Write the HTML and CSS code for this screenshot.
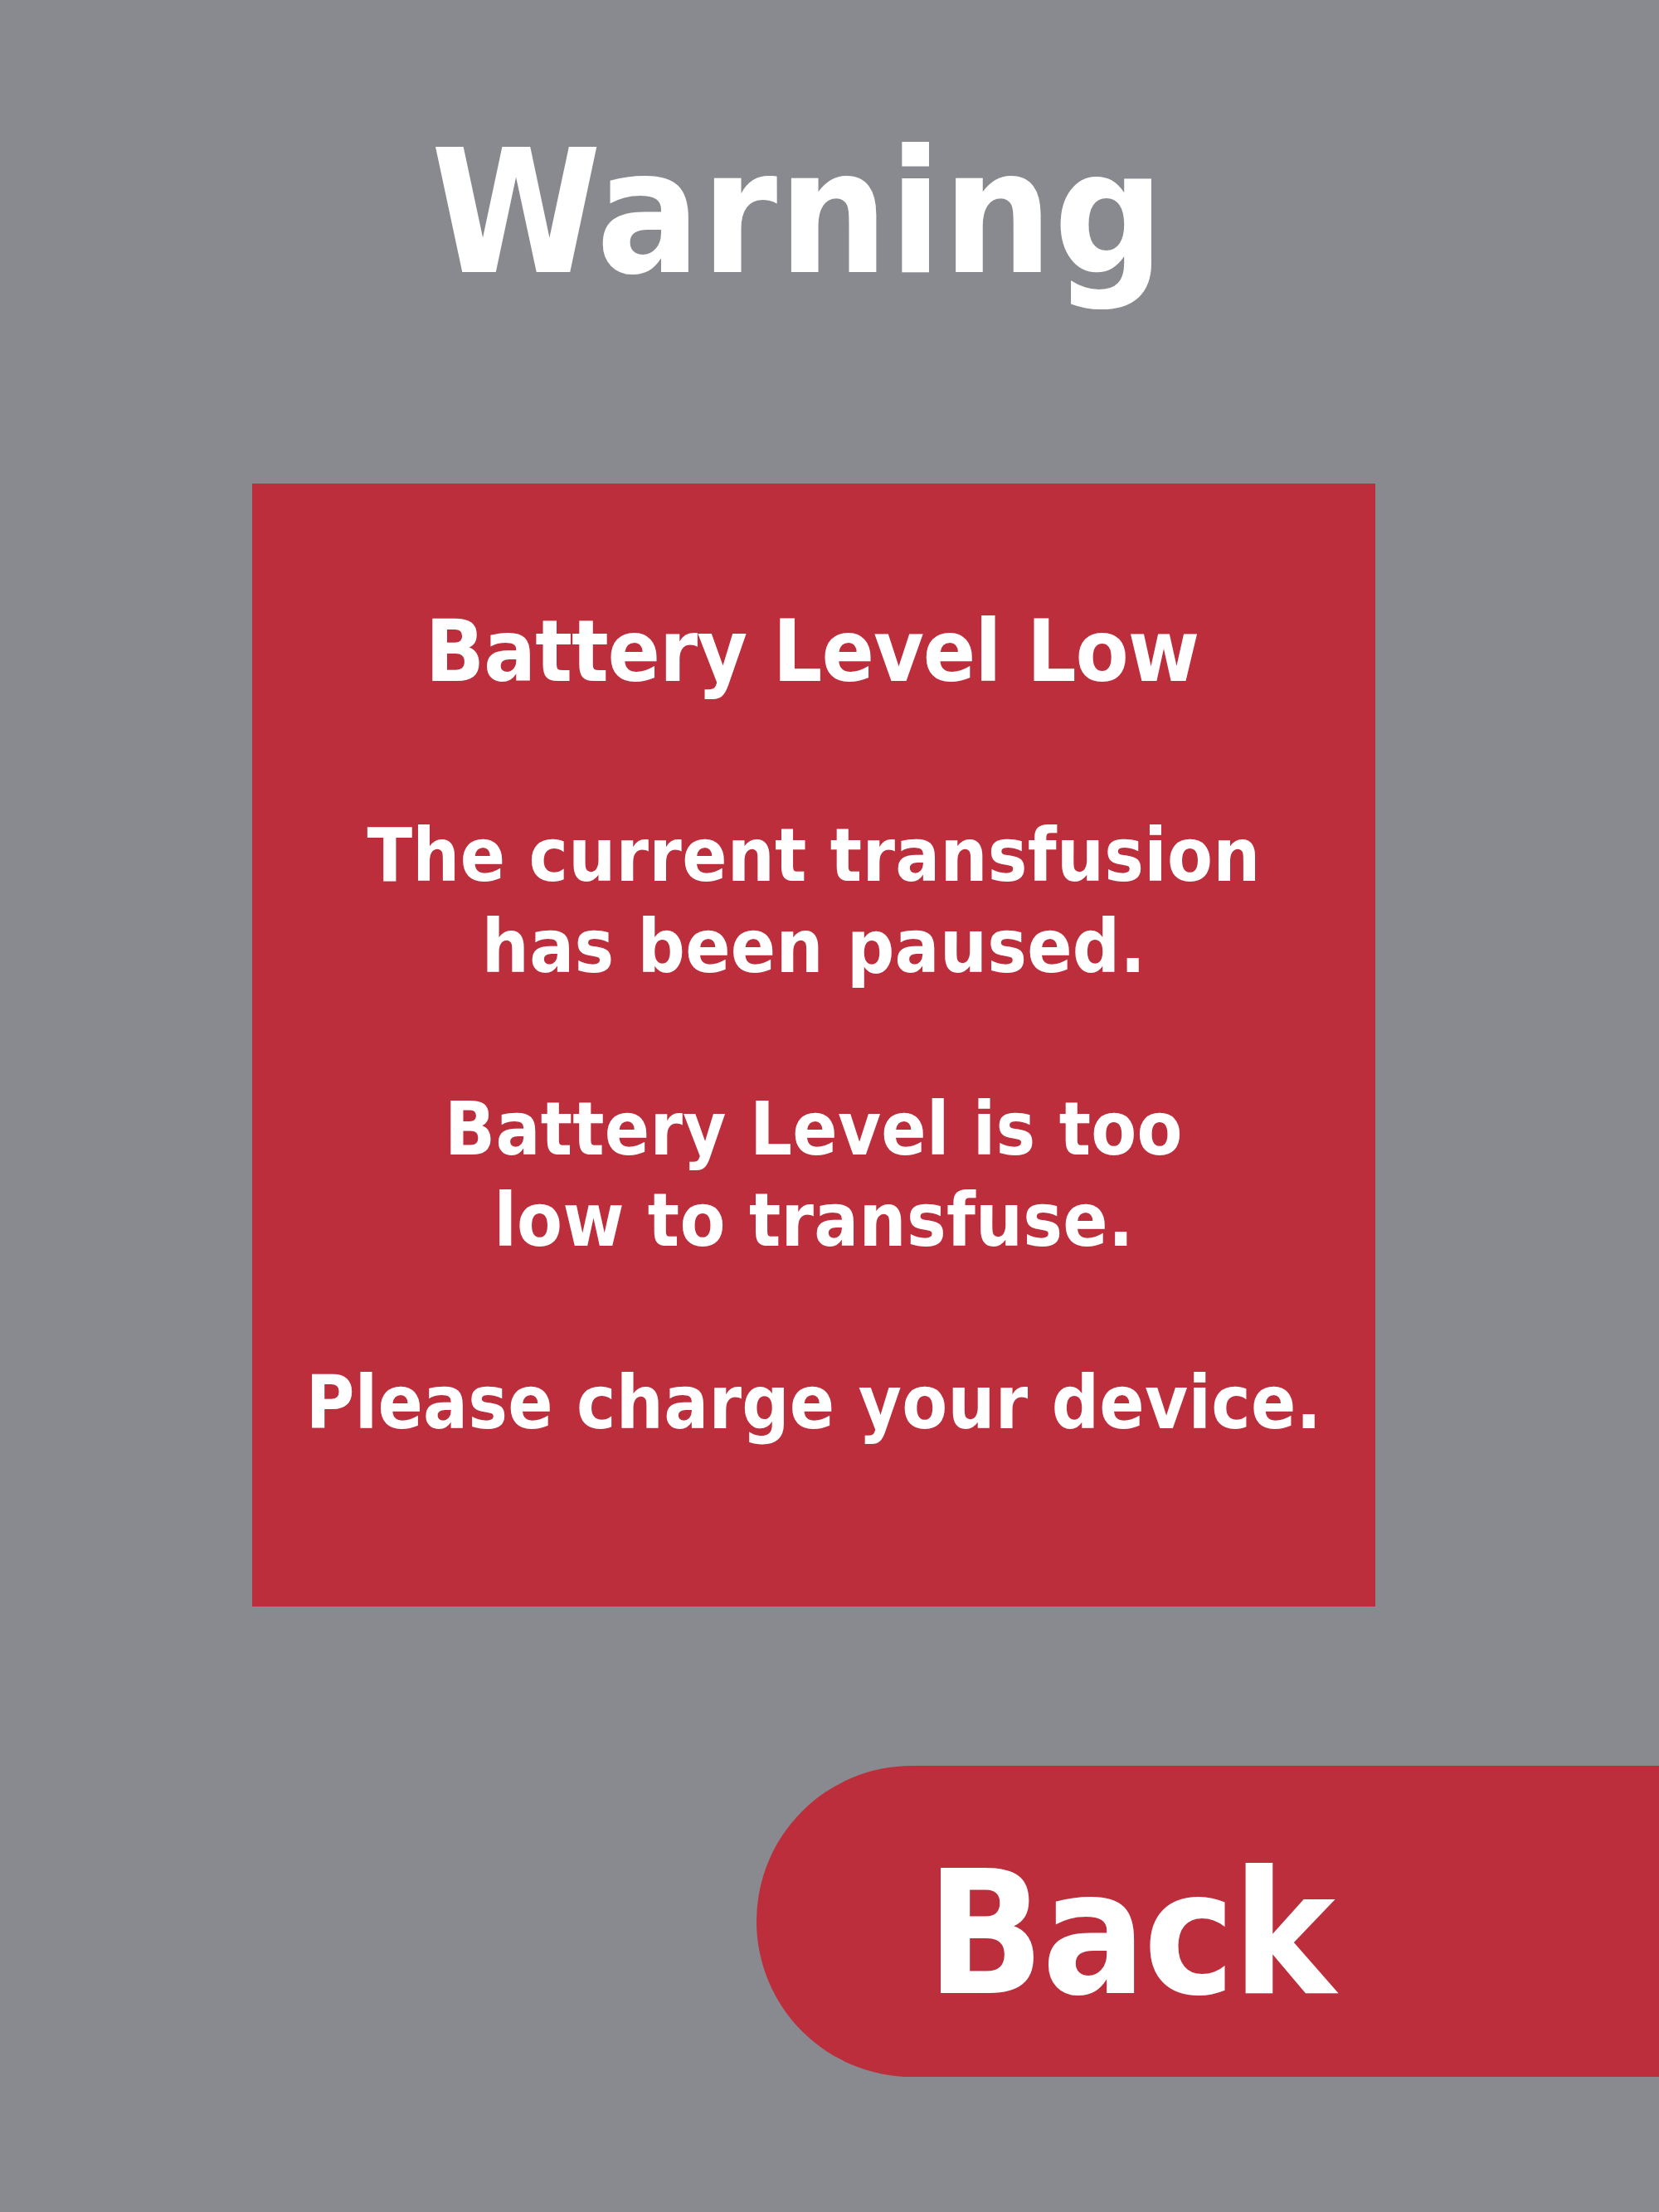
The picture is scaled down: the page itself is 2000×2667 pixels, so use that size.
FILE: index.html
```html
<!DOCTYPE html>
<html lang="en">
<head>
<meta charset="utf-8">
<title>Warning</title>
<link rel="stylesheet" href="styles.css">
</head>
<body>
<div class="screen">
  <h1 class="title">Warning</h1>
  <section class="card">
    <h2 class="card-title">Battery Level Low</h2>
    <p class="msg">The current transfusion<br>has been paused.</p>
    <p class="msg">Battery Level is too<br>low to transfuse.</p>
    <p class="msg">Please charge your device.</p>
  </section>
  <div class="actions">
    <button class="back" type="button">Back</button>
  </div>
</div>
</body>
</html>
```
FILE: styles.css
```css
html, body {
  margin: 0;
  padding: 0;
}
body {
  background: #898a8f;
  font-family: "DejaVu Sans Condensed", "DejaVu Sans", "Liberation Sans", sans-serif;
  font-stretch: condensed;
  font-weight: bold;
  color: #ffffff;
}
.screen {
  width: 2000px;
  height: 2667px;
  overflow: hidden;
  display: flex;
  flex-direction: column;
}
.title {
  margin: 132px 0 0 0;
  padding-right: 76px;
  font-size: 207px;
  line-height: 250px;
  font-weight: bold;
  text-align: center;
  letter-spacing: 1px;
}
.card {
  margin: 201px 0 0 304px;
  width: 1354px;
  height: 1354px;
  box-sizing: border-box;
  padding-top: 137px;
  background: #bc2e3c;
  text-align: center;
}
.card-title {
  margin: 0;
  font-size: 104px;
  line-height: 130px;
  font-weight: bold;
  letter-spacing: -1px;
  padding-right: 4px;
}
.msg {
  margin: 110px 0 0 0;
  font-size: 89px;
  line-height: 110px;
  letter-spacing: 0.3px;
}
.card-title + .msg {
  margin-top: 126px;
}
.actions {
  margin-top: 192px;
  display: flex;
  justify-content: flex-end;
}
.back {
  width: 1088px;
  height: 375px;
  box-sizing: border-box;
  padding: 30px 0 0 205px;
  border: none;
  border-radius: 188px 0 0 188px;
  background: #bc2e3c;
  color: #ffffff;
  font-family: inherit;
  font-stretch: condensed;
  font-weight: bold;
  font-size: 207px;
  line-height: 345px;
  letter-spacing: -3px;
  text-align: left;
}
```
